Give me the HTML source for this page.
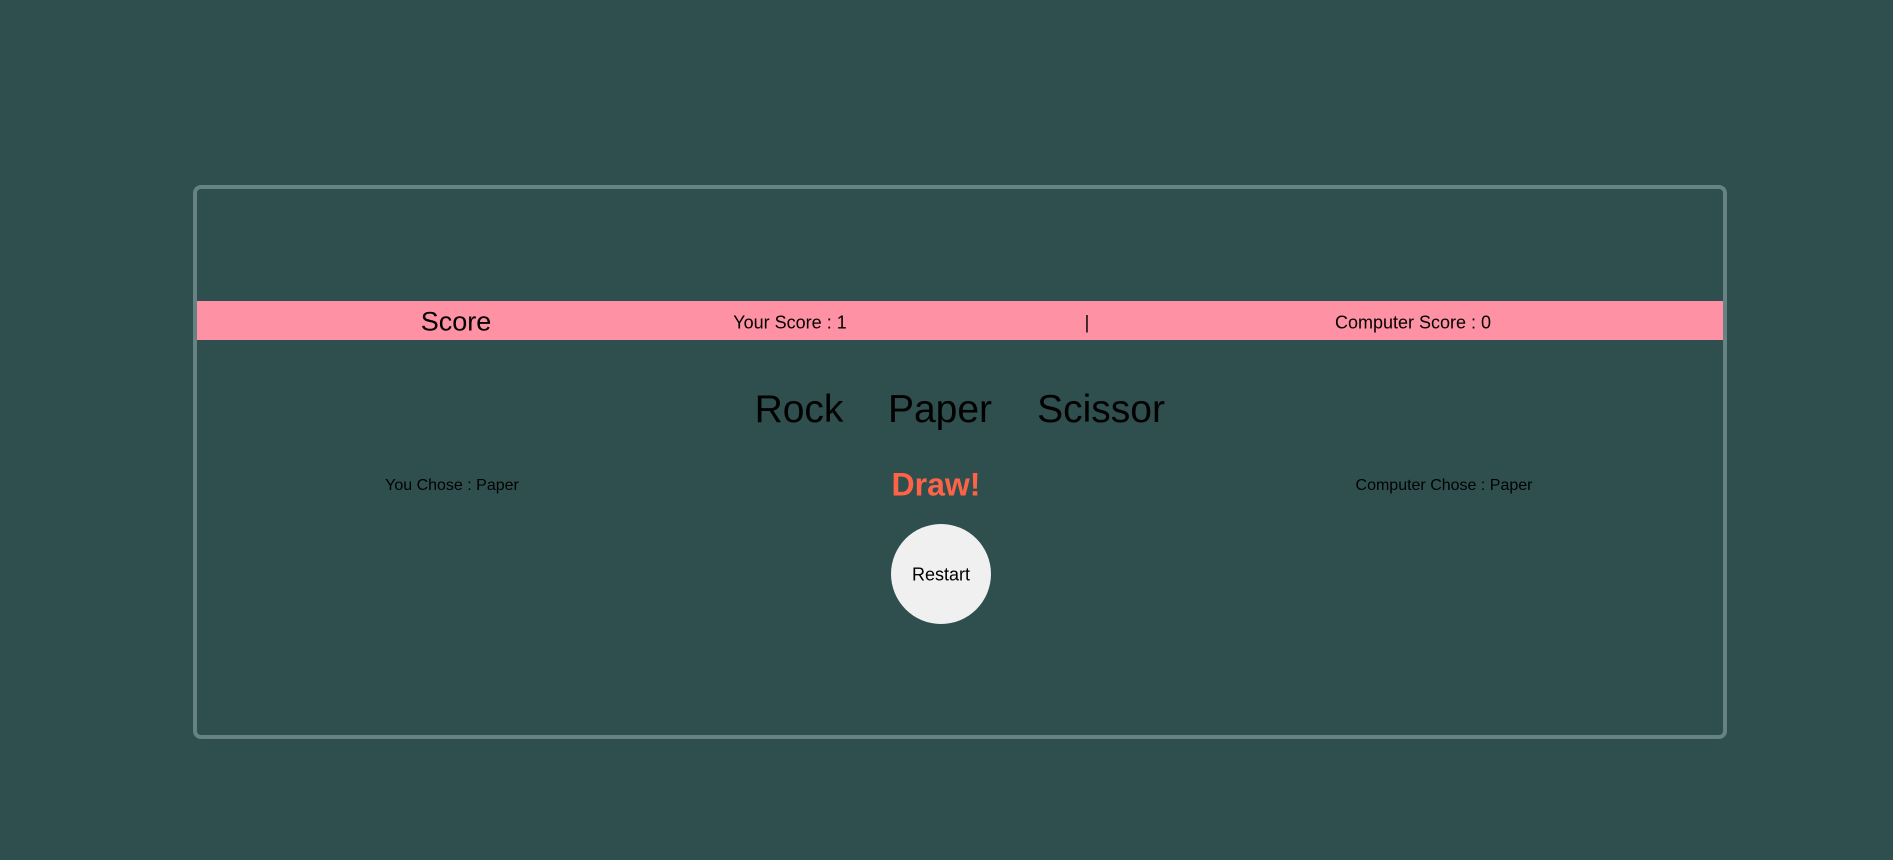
<!DOCTYPE html>
<html><head><meta charset="utf-8"><style>
*{margin:0;padding:0;box-sizing:border-box}
html,body{width:1893px;height:860px;background:#2f4f4f;overflow:hidden;font-family:"Liberation Sans",sans-serif;color:#000}
.box{position:absolute;left:193px;top:185px;width:1534px;height:554px;border:4px solid #668282;border-radius:8px}
.bar{position:absolute;left:197px;top:301px;width:1526px;height:39px;background:#ff91a4}
.t{position:absolute;white-space:nowrap;transform:translate(-50%,-50%)}
.circ{position:absolute;left:891px;top:524px;width:100px;height:100px;border-radius:50%;background:#f0f0f0}
</style></head><body>
<div class="box"></div>
<div class="bar"></div>
<div class="t" style="left:456px;top:322px;font-size:27px">Score</div>
<div class="t" style="left:790px;top:323px;font-size:18px">Your Score : 1</div>
<div class="t" style="left:1087px;top:323px;font-size:18px">|</div>
<div class="t" style="left:1413px;top:323px;font-size:18px">Computer Score : 0</div>
<div class="t" style="left:799px;top:410px;font-size:39px">Rock</div>
<div class="t" style="left:940px;top:410px;font-size:39px">Paper</div>
<div class="t" style="left:1101px;top:410px;font-size:39px">Scissor</div>
<div class="t" style="left:452px;top:486px;font-size:16px">You Chose : Paper</div>
<div class="t" style="left:936px;top:485px;font-size:32px;font-weight:bold;color:#ff6347">Draw!</div>
<div class="t" style="left:1444px;top:486px;font-size:16px">Computer Chose : Paper</div>
<div class="circ"></div>
<div class="t" style="left:941px;top:575px;font-size:18px">Restart</div>
</body></html>
